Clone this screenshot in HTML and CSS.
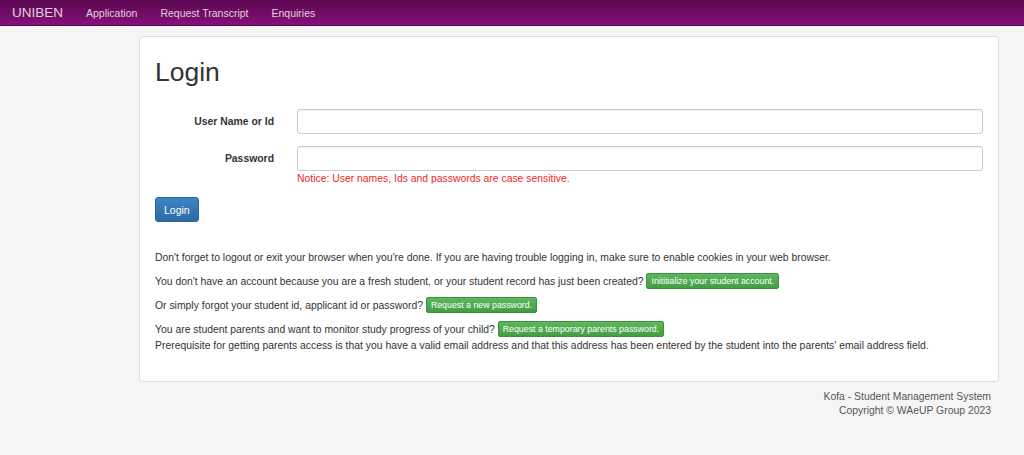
FILE: index.html
```html
<!DOCTYPE html>
<html lang="en">

<head>
    <meta charset="UTF-8">
    <meta name="viewport" content="width=device-width, initial-scale=1.0">
    <title>Login - UNIBEN</title>
    <link rel="stylesheet" href="styles.css">
</head>

<body>
    <!-- Top bar -->
    <nav class="navbar">
        <a class="brand" href="#">UNIBEN</a>
        <a class="nav-link" href="#">Application</a>
        <a class="nav-link" href="#">Request Transcript</a>
        <a class="nav-link" href="#">Enquiries</a>
    </nav>

    <div class="container">
        <div class="card">
            <h1>Login</h1>
            <form class="login-form">
                <label class="form-label" for="login">User Name or Id</label>
                <div class="form-field">
                    <input type="text" id="login" class="form-input">
                </div>
                <label class="form-label" for="password">Password</label>
                <div class="form-field">
                    <input type="password" id="password" class="form-input">
                    <div class="notice">Notice: User names, Ids and passwords are case sensitive.</div>
                </div>
            </form>
            <button class="btn-primary">Login</button>

            <div class="help">
                <p>Don't forget to logout or exit your browser when you're done. If you are having trouble logging in, make sure to enable cookies in your web browser.</p>
                <p>You don't have an account because you are a fresh student, or your student record has just been created? <a class="btn-success" href="#">Inititialize your student account.</a></p>
                <p>Or simply forgot your student id, applicant id or password? <a class="btn-success" href="#">Request a new password.</a></p>
                <p>You are student parents and want to monitor study progress of your child? <a class="btn-success" href="#">Request a temporary parents password.</a><br>
                    Prerequisite for getting parents access is that you have a valid email address and that this address has been entered by the student into the parents' email address field.</p>
            </div>
        </div>

        <footer class="footer">
            Kofa - Student Management System<br>
            Copyright &copy; WAeUP Group 2023
        </footer>
    </div>
</body>

</html>
```

FILE: styles.css
```css
body {
    margin: 0;
    background-color: #f5f5f5;
    font-family: "Liberation Sans", Arial, sans-serif;
    font-size: 10.4px;
    color: #333;
}

.navbar {
    display: flex;
    align-items: center;
    height: 25px;
    background: linear-gradient(to bottom, #5b0750, #84117a);
    border-bottom: 1px solid #5a0a50;
}

.brand {
    color: #e2d0df;
    font-size: 13.5px;
    text-decoration: none;
    padding: 0 23px 0 12px;
}

.nav-link {
    color: #e2d0df;
    font-size: 10.5px;
    text-decoration: none;
    padding: 0 23px 0 0;
}

.container {
    width: 860px;
    margin: 10px 0 0 139px;
}

.card {
    background-color: #fff;
    border: 1px solid #ddd;
    border-radius: 4px;
    padding: 19px 15px 27px 15px;
}

h1 {
    font-size: 26.5px;
    font-weight: normal;
    margin: 0 0 21px 0;
    line-height: 32px;
}

.login-form {
    display: grid;
    grid-template-columns: 142px 1fr;
    row-gap: 12px;
}

.form-label {
    text-align: right;
    font-weight: bold;
    padding-right: 23px;
    line-height: 25px;
}

.form-input {
    display: block;
    box-sizing: border-box;
    width: 100%;
    height: 25px;
    border: 1px solid #ccc;
    border-radius: 3px;
    box-shadow: inset 0 1px 1px rgba(0, 0, 0, 0.06);
}

.notice {
    color: #f21f1f;
    margin-top: 1px;
    line-height: 13px;
}

.btn-primary {
    margin-top: 12px;
    font-family: "Liberation Sans", Arial, sans-serif;
    font-size: 10.5px;
    color: #fff;
    background: linear-gradient(to bottom, #3c85c3, #2c6aa5);
    border: 1px solid #2b669a;
    border-radius: 3px;
    padding: 0 8px;
    height: 25px;
}

.help {
    margin-top: 28px;
}

.help p {
    margin: 0 0 7px 0;
    line-height: 16px;
}

.help p:last-child {
    margin-bottom: 0;
}

.btn-success {
    display: inline-block;
    vertical-align: 1px;
    font-size: 8.8px;
    color: #fff;
    text-decoration: none;
    background: linear-gradient(to bottom, #5cb85c, #449d44);
    border: 1px solid #3e8f3e;
    border-radius: 2px;
    padding: 2px 4px;
    line-height: 10px;
}

.footer {
    text-align: right;
    color: #555;
    line-height: 14px;
    padding: 8px 8px 0 0;
}
```
